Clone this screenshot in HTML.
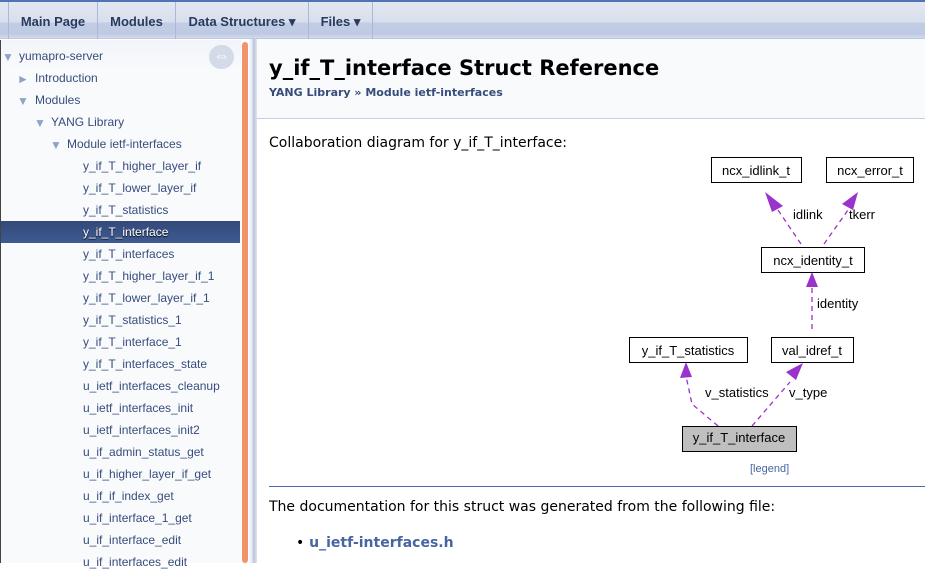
<!DOCTYPE html>
<html><head><style>
*{margin:0;padding:0;box-sizing:border-box}
body{width:925px;height:563px;overflow:hidden;background:#fff;font-family:"DejaVu Sans",sans-serif;position:relative}
#nav{position:absolute;left:0;top:0;width:925px;height:39px;border-top:2px solid #5373B4;background:linear-gradient(#E2E8F2 0,#D8DFEC 20px,#C2CDE5 21px,#BECAE3 32px,#D2DAEA 36px,#A9B8D8 37px)}
#nav a{position:absolute;top:0;height:37px;font:bold 13px "Liberation Sans",sans-serif;line-height:40px;color:#283A5D;text-decoration:none;border-right:1px solid #A9B9D9;text-align:center}
#side{position:absolute;left:0;top:40px;width:241px;height:523px;background:linear-gradient(#F2F4F9,#F9FAFC 30px);font:12px "Liberation Sans",sans-serif;color:#364D7C;border-left:1px solid #444}
#side div{position:absolute;height:22px;line-height:22px;white-space:nowrap}
.tri{position:absolute;color:#8FA3C7;font-size:12px}
#scroll{position:absolute;left:242px;top:42px;width:6px;height:521px;background:#F2936B;border-radius:3px}
#split{position:absolute;left:249px;top:39px;width:8px;height:524px;background:linear-gradient(90deg,#F9FAFC,#E3E8F2 3px,#B5C1DC 5px,#D9E0EE 7px)}
#head{position:absolute;left:257px;top:39px;width:668px;height:80px;background:#F9FAFC;border-bottom:1px solid #C4CFE5}
h1{position:absolute;left:12px;top:17px;font:bold 21px "DejaVu Sans",sans-serif;color:#000}
.bc{position:absolute;left:12px;top:47px;font:bold 11px "DejaVu Sans",sans-serif;color:#364D7C}
.t{position:absolute;font-size:14px;color:#000;white-space:nowrap}
svg text{font-family:"Liberation Sans",sans-serif;font-size:13px}
</style></head><body>
<div id="nav">
<a style="left:8px;width:90px;border-left:1px solid #A9B9D9">Main Page</a>
<a style="left:98px;width:78px">Modules</a>
<a style="left:176px;width:133px">Data Structures ▾</a>
<a style="left:309px;width:64px">Files ▾</a>
</div>
<div id="side">
<span class="tri" style="left:1px;top:10px">▼</span><div style="left:18px;top:5px">yumapro-server</div>
<span class="tri" style="left:16px;top:32px">►</span><div style="left:34px;top:27px">Introduction</div>
<span class="tri" style="left:16px;top:54px">▼</span><div style="left:34px;top:49px">Modules</div>
<span class="tri" style="left:33px;top:76px">▼</span><div style="left:50px;top:71px">YANG Library</div>
<span class="tri" style="left:49px;top:98px">▼</span><div style="left:66px;top:93px">Module ietf-interfaces</div>
<div style="left:82px;top:115px">y_if_T_higher_layer_if</div>
<div style="left:82px;top:137px">y_if_T_lower_layer_if</div>
<div style="left:82px;top:159px">y_if_T_statistics</div>
<div style="left:0;top:181px;width:239px;background:linear-gradient(#34497A,#3E5A92);color:#fff;padding-left:82px;text-shadow:0 1px 1px #000">y_if_T_interface</div>
<div style="left:82px;top:203px">y_if_T_interfaces</div>
<div style="left:82px;top:225px">y_if_T_higher_layer_if_1</div>
<div style="left:82px;top:247px">y_if_T_lower_layer_if_1</div>
<div style="left:82px;top:269px">y_if_T_statistics_1</div>
<div style="left:82px;top:291px">y_if_T_interface_1</div>
<div style="left:82px;top:313px">y_if_T_interfaces_state</div>
<div style="left:82px;top:335px">u_ietf_interfaces_cleanup</div>
<div style="left:82px;top:357px">u_ietf_interfaces_init</div>
<div style="left:82px;top:379px">u_ietf_interfaces_init2</div>
<div style="left:82px;top:401px">u_if_admin_status_get</div>
<div style="left:82px;top:423px">u_if_higher_layer_if_get</div>
<div style="left:82px;top:445px">u_if_if_index_get</div>
<div style="left:82px;top:467px">u_if_interface_1_get</div>
<div style="left:82px;top:489px">u_if_interface_edit</div>
<div style="left:82px;top:511px">u_if_interfaces_edit</div>
<div style="left:208px;top:5px;width:25px;height:24px;border-radius:12px;background:#D3DAE8;color:#fff;text-align:center;font-size:16px;line-height:24px;font-weight:bold">⇔</div>
</div>
<div id="scroll"></div>
<div id="split"></div>
<div id="head"><h1>y_if_T_interface Struct Reference</h1><div class="bc">YANG Library » Module ietf-interfaces</div></div>
<div class="t" style="left:269px;top:135px">Collaboration diagram for y_if_T_interface:</div>
<svg style="position:absolute;left:600px;top:150px" width="325" height="330">
<g fill="none" stroke="#9A32CD" stroke-dasharray="5,4" stroke-width="1.3">
<path d="M201 94 L178 60"/><path d="M224 94 L248 60"/><path d="M212 179 L212 136"/><path d="M118 276 L92 254 L86 226"/><path d="M152 276 L190 232"/>
</g>
<g fill="#9A32CD"><path d="M165 42 L183 56 L172 62Z"/><path d="M258 42 L253 60 L242 54Z"/><path d="M212 122 L218 137 L206 137Z"/><path d="M86 212 L92 227 L80 228Z"/><path d="M203 213 L196 230 L186 222Z"/></g>
<g stroke="#000" fill="#fff"><rect x="111.5" y="7.5" width="90" height="25"/><rect x="226.5" y="7.5" width="87" height="25"/><rect x="161.5" y="97.5" width="103" height="25"/><rect x="29.5" y="187.5" width="118" height="25"/><rect x="171.5" y="187.5" width="82" height="25"/><rect x="82.5" y="276.5" width="114" height="25" fill="#BFBFBF"/></g>
<g text-anchor="middle"><text x="156" y="25">ncx_idlink_t</text><text x="270" y="25">ncx_error_t</text><text x="213" y="115">ncx_identity_t</text><text x="88" y="205">y_if_T_statistics</text><text x="212" y="205">val_idref_t</text><text x="139" y="292">y_if_T_interface</text></g>
<text x="193" y="69">idlink</text><text x="249" y="69">tkerr</text><text x="217" y="158">identity</text><text x="105" y="247">v_statistics</text><text x="189" y="247">v_type</text>
<text x="150" y="322" style="font-size:11px" fill="#4665A2">[legend]</text>
</svg>
<div style="position:absolute;left:269px;top:486px;width:656px;border-top:1px solid #4A6AAA"></div>
<div class="t" style="left:269px;top:499px">The documentation for this struct was generated from the following file:</div>
<div class="t" style="left:296px;top:535px;font-weight:bold;color:#4665A2"><span style="color:#000;font-weight:normal">•</span> u_ietf-interfaces.h</div>
</body></html>
